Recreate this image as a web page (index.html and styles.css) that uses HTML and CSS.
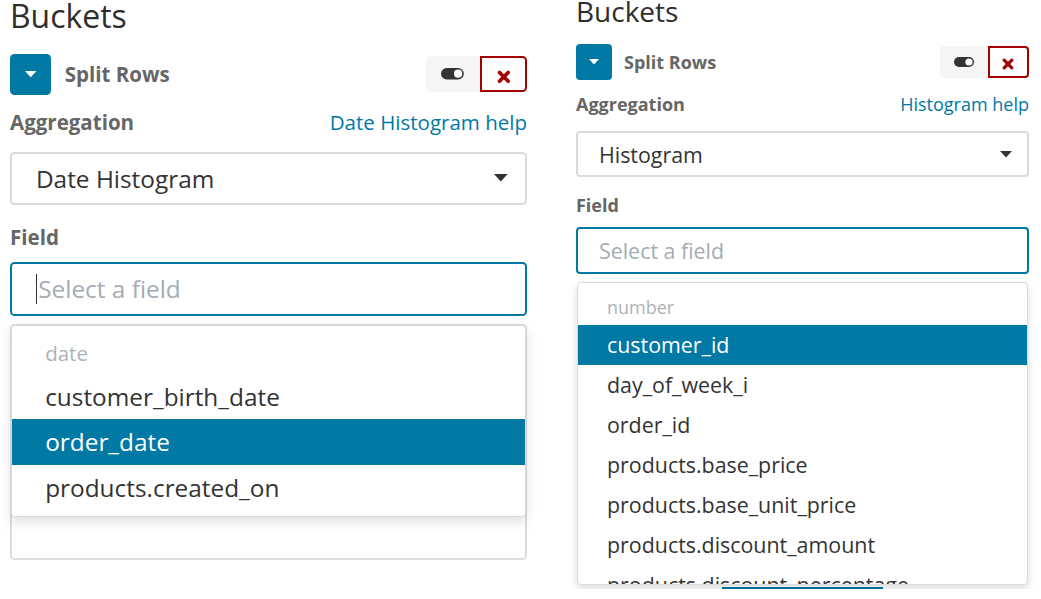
FILE: index.html
```html
<!DOCTYPE html>
<html lang="en">
<head>
<meta charset="utf-8">
<title>Buckets</title>
<link rel="stylesheet" href="styles.css">
</head>
<body>
<div class="page">
  <section class="panel panel--large">
    <h2 class="title">Buckets</h2>
    <div class="agg-head">
      <button class="collapse-btn" type="button"><svg width="10" height="6" viewBox="0 0 10 6"><path d="M0 0h10L5 5.5z" fill="#fff"/></svg></button>
      <span class="agg-name">Split Rows</span>
      <div class="agg-actions">
        <span class="act act--toggle"><svg width="20" height="10" viewBox="0 0 20 10"><rect width="20" height="10" rx="5" fill="#343434"/><circle cx="15" cy="5" r="3.6" fill="#fff"/></svg></span>
        <span class="act act--remove"><svg width="12" height="12" viewBox="0 0 12 12"><path d="M2.2 2.2L9.8 9.8M9.8 2.2L2.2 9.8" stroke="#a30000" stroke-width="3.2" stroke-linecap="round"/></svg></span>
      </div>
    </div>
    <div class="label-row"><span class="label">Aggregation</span><a class="help" href="#">Date Histogram help</a></div>
    <div class="select select--tall"><span>Date Histogram</span><svg width="12" height="7" viewBox="0 0 12 7"><path d="M0 0h12L6 6.5z" fill="#333"/></svg></div>
    <div class="label-row label-row--field"><span class="label">Field</span></div>
    <div class="combo">
      <div class="input"><span class="caret-bar"></span><span class="placeholder">Select a field</span></div>
      <ul class="menu menu--short">
        <li class="menu-group">date</li>
        <li class="menu-item">customer_birth_date</li>
        <li class="menu-item is-active">order_date</li>
        <li class="menu-item">products.created_on</li>
      </ul>
    </div>
    <div class="under-box"></div>
  </section>

  <section class="panel">
    <h2 class="title">Buckets</h2>
    <div class="agg-head">
      <button class="collapse-btn" type="button"><svg width="10" height="6" viewBox="0 0 10 6"><path d="M0 0h10L5 5.5z" fill="#fff"/></svg></button>
      <span class="agg-name">Split Rows</span>
      <div class="agg-actions">
        <span class="act act--toggle"><svg width="20" height="10" viewBox="0 0 20 10"><rect width="20" height="10" rx="5" fill="#343434"/><circle cx="15" cy="5" r="3.6" fill="#fff"/></svg></span>
        <span class="act act--remove"><svg width="12" height="12" viewBox="0 0 12 12"><path d="M2.2 2.2L9.8 9.8M9.8 2.2L2.2 9.8" stroke="#a30000" stroke-width="3.2" stroke-linecap="round"/></svg></span>
      </div>
    </div>
    <div class="label-row"><span class="label">Aggregation</span><a class="help" href="#">Histogram help</a></div>
    <div class="select"><span>Histogram</span><svg width="12" height="7" viewBox="0 0 12 7"><path d="M0 0h12L6 6.5z" fill="#333"/></svg></div>
    <div class="label-row label-row--field"><span class="label">Field</span></div>
    <div class="combo">
      <div class="input"><span class="placeholder">Select a field</span></div>
      <ul class="menu menu--scroll">
        <li class="menu-group">number</li>
        <li class="menu-item is-active">customer_id</li>
        <li class="menu-item">day_of_week_i</li>
        <li class="menu-item">order_id</li>
        <li class="menu-item">products.base_price</li>
        <li class="menu-item">products.base_unit_price</li>
        <li class="menu-item">products.discount_amount</li>
        <li class="menu-item">products.discount_percentage</li>
        <li class="menu-item">products.min_price</li>
      </ul>
    </div>
    <div class="under-line"></div>
  </section>
</div>
</body>
</html>
```

FILE: styles.css
```css
* { box-sizing: border-box; }

html, body {
  margin: 0;
  background: #fff;
}

body {
  font-family: "Open Sans", "Noto Sans", sans-serif;
  color: #333;
}

.page {
  display: flex;
  align-items: flex-start;
  gap: 49px;
  padding-left: 10px;
}

.panel {
  width: 453px;
}

.panel--large {
  zoom: 1.14;
  width: 453.5px;
  padding-top: 3px;
}

.title {
  margin: -3px 0 0;
  font-size: 28px;
  line-height: 28px;
  font-weight: 400;
  color: #2e2e2e;
}

.agg-head {
  display: flex;
  align-items: center;
  height: 36px;
  margin-top: 19px;
}

.collapse-btn {
  width: 36px;
  height: 36px;
  padding: 0;
  border: 0;
  border-radius: 4px;
  background: #0079a5;
  display: flex;
  align-items: center;
  justify-content: center;
}

.agg-name {
  margin-left: 12px;
  font-size: 18px;
  font-weight: 700;
  color: #666;
}

.agg-actions {
  margin-left: auto;
  display: flex;
  height: 32px;
}

.act {
  display: flex;
  align-items: center;
  justify-content: center;
  height: 32px;
}

.act--toggle {
  width: 48px;
  background: #f5f5f5;
  border-radius: 4px 0 0 4px;
}

.act--remove {
  width: 41px;
  padding-top: 4px;
  background: #fff;
  border: 2px solid #a30000;
  border-radius: 0 4px 4px 0;
}

.label-row {
  display: flex;
  justify-content: space-between;
  align-items: baseline;
  margin-top: 12px;
  font-size: 18px;
  line-height: 25px;
}

.label-row--field {
  margin-top: 16px;
}

.label {
  font-weight: 700;
  color: #666;
}

.help {
  color: #0079a5;
  text-decoration: none;
}

.select {
  display: flex;
  align-items: center;
  justify-content: space-between;
  height: 46px;
  margin-top: 14px;
  padding: 0 15px 0 21px;
  border: 2px solid #dadada;
  border-radius: 4px;
  font-size: 21.4px;
  color: #333;
}

.select--tall {
  height: 47px;
  margin-top: 13px;
}

.combo {
  position: relative;
  margin-top: 9px;
}

.input {
  display: flex;
  align-items: center;
  height: 47px;
  padding-left: 21px;
  border: 2px solid #0079a5;
  border-radius: 4px;
  font-size: 21.4px;
}

.caret-bar {
  width: 1px;
  height: 27px;
  margin-right: 1px;
  background: #333;
}

.placeholder {
  color: #a3acb5;
}

.menu {
  position: absolute;
  top: calc(100% + 8px);
  left: 1px;
  right: 1px;
  z-index: 2;
  margin: 0;
  padding: 6px 0 0;
  list-style: none;
  background: #fff;
  border: 1px solid #d9d9d9;
  border-radius: 4px;
  box-shadow: 0 4px 10px rgba(0, 0, 0, 0.13);
  overflow: hidden;
}

.menu--short {
  padding-bottom: 5px;
}

.menu--scroll {
  height: 303px;
}

.menu-group {
  height: 36px;
  line-height: 36px;
  padding-left: 29px;
  font-size: 18px;
  color: #abb3ba;
}

.menu-item {
  height: 40px;
  line-height: 40px;
  padding-left: 29px;
  font-size: 21.4px;
  color: #333;
  white-space: nowrap;
}

.menu-item.is-active {
  background: #0079a5;
  color: #fff;
}

.under-box {
  height: 207px;
  margin-top: 7px;
  border: 2px solid #ddd;
  border-radius: 4px;
}

.under-line {
  width: 161px;
  height: 2px;
  margin: 313px 0 0 146px;
  background: #0079a5;
}
```
